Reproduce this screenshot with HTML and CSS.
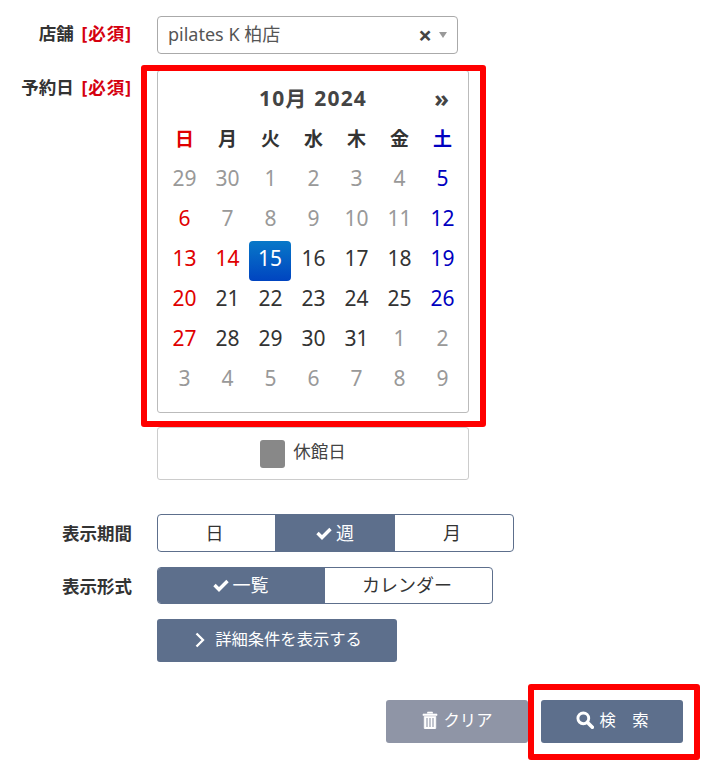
FILE: index.html
```html
<!DOCTYPE html>
<html lang="ja">
<head>
  <meta charset="UTF-8" />
  <title>予約検索</title>
  <link rel="stylesheet" href="styles.css">
</head>
<body>
  <form class="search-form">
    <div class="row">
      <label class="row-label">店舗 <span class="required">[必須]</span></label>
      <div class="select">
        <span class="select-value">pilates K 柏店</span>
        <span class="select-clear">×</span>
        <span class="select-arrow"></span>
      </div>
    </div>

    <div class="row">
      <label class="row-label">予約日 <span class="required">[必須]</span></label>
      <div class="date-field">
        <div class="calendar">
          <div class="cal-head">
            <span class="cal-title">10月 2024</span>
            <span class="cal-next">»</span>
          </div>
          <div class="cal-grid">
            <div class="dow sun">日</div><div class="dow">月</div><div class="dow">火</div><div class="dow">水</div><div class="dow">木</div><div class="dow">金</div><div class="dow sat">土</div>

            <div class="day off">29</div><div class="day off">30</div><div class="day off">1</div><div class="day off">2</div><div class="day off">3</div><div class="day off">4</div><div class="day sat">5</div>
            <div class="day sun">6</div><div class="day off">7</div><div class="day off">8</div><div class="day off">9</div><div class="day off">10</div><div class="day off">11</div><div class="day sat">12</div>
            <div class="day sun">13</div><div class="day sun">14</div><div class="day today">15</div><div class="day">16</div><div class="day">17</div><div class="day">18</div><div class="day sat">19</div>
            <div class="day sun">20</div><div class="day">21</div><div class="day">22</div><div class="day">23</div><div class="day">24</div><div class="day">25</div><div class="day sat">26</div>
            <div class="day sun">27</div><div class="day">28</div><div class="day">29</div><div class="day">30</div><div class="day">31</div><div class="day off">1</div><div class="day off">2</div>
            <div class="day off">3</div><div class="day off">4</div><div class="day off">5</div><div class="day off">6</div><div class="day off">7</div><div class="day off">8</div><div class="day off">9</div>
          </div>
          <div class="highlight highlight-cal"></div>
        </div>
        <div class="legend">
          <span class="legend-swatch"></span>
          <span class="legend-text">休館日</span>
        </div>
      </div>
    </div>

    <div class="row row-center row-period">
      <label class="row-label">表示期間</label>
      <div class="segment segment-period">
        <div class="seg-item seg-plain">日</div>
        <div class="seg-item active">
          <svg class="icon icon-check" viewBox="0 0 16 14"><path d="M1.500 7l4.500 4.500 8.500-8.500" fill="none" stroke="currentColor" stroke-width="3.400"/></svg>
          週
        </div>
        <div class="seg-item seg-plain">月</div>
      </div>
    </div>

    <div class="row row-center row-format">
      <label class="row-label">表示形式</label>
      <div class="segment segment-format">
        <div class="seg-item active">
          <svg class="icon icon-check" viewBox="0 0 16 14"><path d="M1.500 7l4.500 4.500 8.500-8.500" fill="none" stroke="currentColor" stroke-width="3.400"/></svg>
          一覧
        </div>
        <div class="seg-item">カレンダー</div>
      </div>
    </div>

    <div class="row row-detail">
      <div class="row-label"></div>
      <button type="button" class="btn btn-detail">
        <svg class="icon icon-chevron" viewBox="0 0 10 16"><path d="M1.500 1.500l6.500 6.500-6.500 6.500" fill="none" stroke="currentColor" stroke-width="2.300"/></svg>
        詳細条件を表示する
      </button>
    </div>

    <div class="actions">
      <button type="button" class="btn btn-clear">
        <svg class="icon icon-trash" viewBox="0 0 16 18"><path d="M5.500 2.500V1h5v1.500M1 3h14v1.600H1zM2.200 5.500h11.600V17a1 1 0 0 1-1 1H3.200a1 1 0 0 1-1-1z" fill="currentColor" stroke="currentColor" stroke-width=".6"/><path d="M5 7v9M8 7v9M11 7v9" stroke="#8f95a6" stroke-width="1.100"/></svg>
        クリア
      </button>
      <div class="search-wrap">
        <button type="button" class="btn btn-search">
          <svg class="icon icon-search" viewBox="0 0 16 16"><circle cx="6.500" cy="6.500" r="4.800" fill="none" stroke="currentColor" stroke-width="2.600"/><path d="M10 10l4.500 4.500" stroke="currentColor" stroke-width="3.200" stroke-linecap="round"/></svg>
          検　索
        </button>
        <div class="highlight highlight-search"></div>
      </div>
    </div>
  </form>
</body>
</html>
```

FILE: styles.css
```css
* {
  box-sizing: border-box;
  margin: 0;
  padding: 0;
}
body {
  font-family: 'Noto Sans', 'Noto Sans CJK JP', sans-serif;
  background: #fff;
  color: #333;
  font-size: 16px;
}

.search-form {
  width: 718px;
  min-height: 779px;
  padding-top: 16px;
}

.row {
  display: flex;
  gap: 25px;
  margin-bottom: 16px;
}
.row-center {
  align-items: center;
}
.row-period {
  margin-top: 34px;
  margin-bottom: 15px;
}
.row-format {
  margin-bottom: 15px;
}
.row-label {
  width: 132px;
  flex-shrink: 0;
  text-align: right;
  font-weight: 700;
  font-size: 17.500px;
  line-height: 24px;
  white-space: nowrap;
  color: #333;
}
.row:nth-child(-n+2) .row-label {
  padding-top: 5px;
}
.required {
  color: #d5000f;
  letter-spacing: 1px;
  margin-left: 3px;
}

/* Select */
.select {
  width: 301px;
  height: 38px;
  border: 1px solid #aaa;
  border-radius: 4px;
  display: flex;
  align-items: center;
  padding: 0 10px 5px;
  font-size: 18px;
  color: #555;
}
.select-value {
  flex: 1;
}
.select-clear {
  font-size: 24px;
  font-weight: 700;
  color: #444;
  margin-right: 7px;
  margin-bottom: -5px;
  line-height: 1;
}
.select-arrow {
  width: 0;
  height: 0;
  margin-bottom: -5px;
  border-left: 4.500px solid transparent;
  border-right: 4.500px solid transparent;
  border-top: 6px solid #999;
}

/* Calendar */
.date-field {
  width: 312px;
}
.calendar {
  position: relative;
  height: 343px;
  border: 1px solid #bbb;
  border-radius: 3px;
  padding: 7px 5px 0;
}
.cal-head {
  display: grid;
  grid-template-columns: 43px 1fr 43px;
  height: 40px;
  align-items: center;
}
.cal-title {
  grid-column: 2;
  text-align: center;
  font-size: 21px;
  letter-spacing: 1.200px;
  font-weight: 700;
  line-height: 36px;
  color: #444;
}
.cal-next {
  text-align: center;
  font-size: 24px;
  font-weight: 700;
  line-height: 1;
  color: #444;
}
.cal-grid {
  display: grid;
  grid-template-columns: repeat(7, 43px);
  grid-auto-rows: 40px;
}
.dow,
.day {
  display: flex;
  align-items: center;
  justify-content: center;
  font-size: 21px;
  color: #333;
}
.dow {
  font-size: 19px;
  font-weight: 700;
}
.day.off {
  color: #999;
}
.dow.sun,
.day.sun {
  color: #e00000;
}
.dow.sat,
.day.sat {
  color: #0000c0;
}
.day.today {
  margin: 3px 1px -3px 0;
  padding-bottom: 6px;
  color: #fff;
  background: linear-gradient(#0878c8, #0044c0);
  border-radius: 4px;
}

.legend {
  margin-top: 14px;
  height: 53px;
  padding-right: 20px;
  border: 1px solid #ccc;
  border-radius: 3px;
  display: flex;
  align-items: center;
  justify-content: center;
  gap: 8px;
  font-size: 17.500px;
  color: #444;
}
.legend-text {
  padding-bottom: 6px;
}
.legend-swatch {
  width: 25px;
  height: 28px;
  background: #888;
  border-radius: 3px;
}

/* Segmented buttons */
.segment {
  display: flex;
  border: 1px solid #5d6f8c;
  border-radius: 4px;
  overflow: hidden;
}
.segment-period {
  width: 357px;
  height: 38px;
}
.segment-format {
  width: 336px;
  height: 37px;
}
.seg-item {
  display: flex;
  align-items: center;
  justify-content: center;
  gap: 4px;
  font-size: 18px;
  color: #333;
  padding-bottom: 3px;
}
.seg-plain {
  padding-right: 4px;
}
.segment-period .seg-item:nth-child(1) {
  width: 117px;
}
.segment-period .seg-item:nth-child(2) {
  width: 120px;
}
.segment-period .seg-item:nth-child(3) {
  flex: 1;
}
.segment-format .seg-item:first-child {
  width: 167px;
  padding-right: 2px;
}
.segment-format .seg-item:last-child {
  flex: 1;
  padding-right: 3px;
}
.seg-item.active {
  background: #5d6f8c;
  color: #fff;
}

.icon {
  width: 16px;
  height: 16px;
  flex-shrink: 0;
}
.icon-check {
  height: 14px;
  margin-top: 2px;
}
.icon-chevron {
  width: 10px;
  margin-right: 4px;
  margin-top: 4px;
}
.icon-trash {
  height: 18px;
  margin-top: 2px;
}
.icon-search {
  width: 18px;
  height: 18px;
  margin-top: 3px;
}

/* Buttons */
.btn {
  display: flex;
  align-items: center;
  justify-content: center;
  border: 0;
  border-radius: 3px;
  color: #fff;
  font-family: inherit;
  font-size: 16.300px;
  gap: 6px;
  height: 43px;
  padding-bottom: 6px;
  background: #5d6f8c;
}
.btn-detail {
  width: 240px;
  padding-left: 3px;
}
.row-detail {
  margin-bottom: 38px;
}
.actions {
  display: flex;
  justify-content: flex-end;
  gap: 13px;
  padding-right: 35px;
}
.btn-clear {
  width: 142px;
  background: #8f95a6;
}
.search-wrap {
  position: relative;
}
.btn-search {
  width: 142px;
}

/* Red marker boxes laid over the screenshot */
.highlight {
  position: absolute;
  border: 6px solid #f00;
  border-radius: 3px;
  pointer-events: none;
}
.highlight-cal {
  top: -6px;
  left: -17px;
  right: -18px;
  bottom: -15px;
}
.highlight-search {
  top: -16px;
  left: -13px;
  right: -17px;
  bottom: -17px;
}
```
